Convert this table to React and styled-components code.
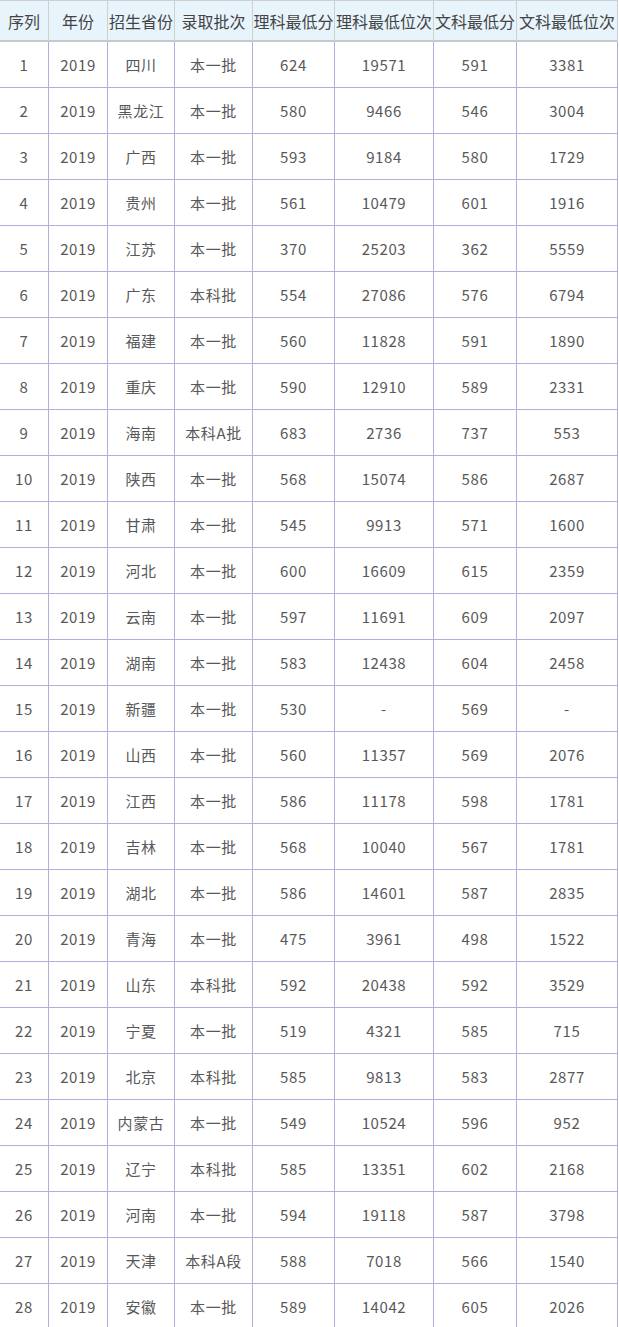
import styled, { createGlobalStyle } from 'styled-components';

const GlobalStyle = createGlobalStyle`
  body {
    margin: 0;
    background: #fff;
    font-family: "Noto Sans CJK SC", "Liberation Sans", sans-serif;
  }
`;

const Table = styled.table`
  border-collapse: separate;
  border-spacing: 0;
  width: 618px;
  table-layout: fixed;
`;

const HeadCell = styled.th`
  height: 39px;
  padding: 0;
  background: #e8f4fc;
  color: #444;
  font-size: 16px;
  font-weight: normal;
  text-align: center;
  white-space: nowrap;
  border-top: 1px solid #cfcfcf;
  border-right: 1px solid #cfcfcf;
  border-bottom: 2px solid #c8c8c8;
`;

const Cell = styled.td`
  height: 45px;
  padding: 0;
  color: #585858;
  font-size: 15px;
  letter-spacing: 0.6px;
  text-align: center;
  white-space: nowrap;
  border-right: 1px solid #b4acdf;
  border-bottom: 1px solid #b4acdf;
`;

const widths = [49, 59, 67, 78, 82, 99, 83, 101];
const heads = ['序列', '年份', '招生省份', '录取批次', '理科最低分', '理科最低位次', '文科最低分', '文科最低位次'];

const rows = [
  ['四川', '本一批', 624, 19571, 591, 3381],
  ['黑龙江', '本一批', 580, 9466, 546, 3004],
  ['广西', '本一批', 593, 9184, 580, 1729],
  ['贵州', '本一批', 561, 10479, 601, 1916],
  ['江苏', '本一批', 370, 25203, 362, 5559],
  ['广东', '本科批', 554, 27086, 576, 6794],
  ['福建', '本一批', 560, 11828, 591, 1890],
  ['重庆', '本一批', 590, 12910, 589, 2331],
  ['海南', '本科A批', 683, 2736, 737, 553],
  ['陕西', '本一批', 568, 15074, 586, 2687],
  ['甘肃', '本一批', 545, 9913, 571, 1600],
  ['河北', '本一批', 600, 16609, 615, 2359],
  ['云南', '本一批', 597, 11691, 609, 2097],
  ['湖南', '本一批', 583, 12438, 604, 2458],
  ['新疆', '本一批', 530, '-', 569, '-'],
  ['山西', '本一批', 560, 11357, 569, 2076],
  ['江西', '本一批', 586, 11178, 598, 1781],
  ['吉林', '本一批', 568, 10040, 567, 1781],
  ['湖北', '本一批', 586, 14601, 587, 2835],
  ['青海', '本一批', 475, 3961, 498, 1522],
  ['山东', '本科批', 592, 20438, 592, 3529],
  ['宁夏', '本一批', 519, 4321, 585, 715],
  ['北京', '本科批', 585, 9813, 583, 2877],
  ['内蒙古', '本一批', 549, 10524, 596, 952],
  ['辽宁', '本科批', 585, 13351, 602, 2168],
  ['河南', '本一批', 594, 19118, 587, 3798],
  ['天津', '本科A段', 588, 7018, 566, 1540],
  ['安徽', '本一批', 589, 14042, 605, 2026],
];

export default function App() {
  return (
    <>
      <GlobalStyle />
      <Table>
        <colgroup>
          {widths.map((w, i) => (
            <col key={i} style={{ width: w }} />
          ))}
        </colgroup>
        <thead>
          <tr>
            {heads.map((h) => (
              <HeadCell key={h}>{h}</HeadCell>
            ))}
          </tr>
        </thead>
        <tbody>
          {rows.map((r, i) => (
            <tr key={i}>
              <Cell>{i + 1}</Cell>
              <Cell>2019</Cell>
              {r.map((v, j) => (
                <Cell key={j}>{v}</Cell>
              ))}
            </tr>
          ))}
        </tbody>
      </Table>
    </>
  );
}
